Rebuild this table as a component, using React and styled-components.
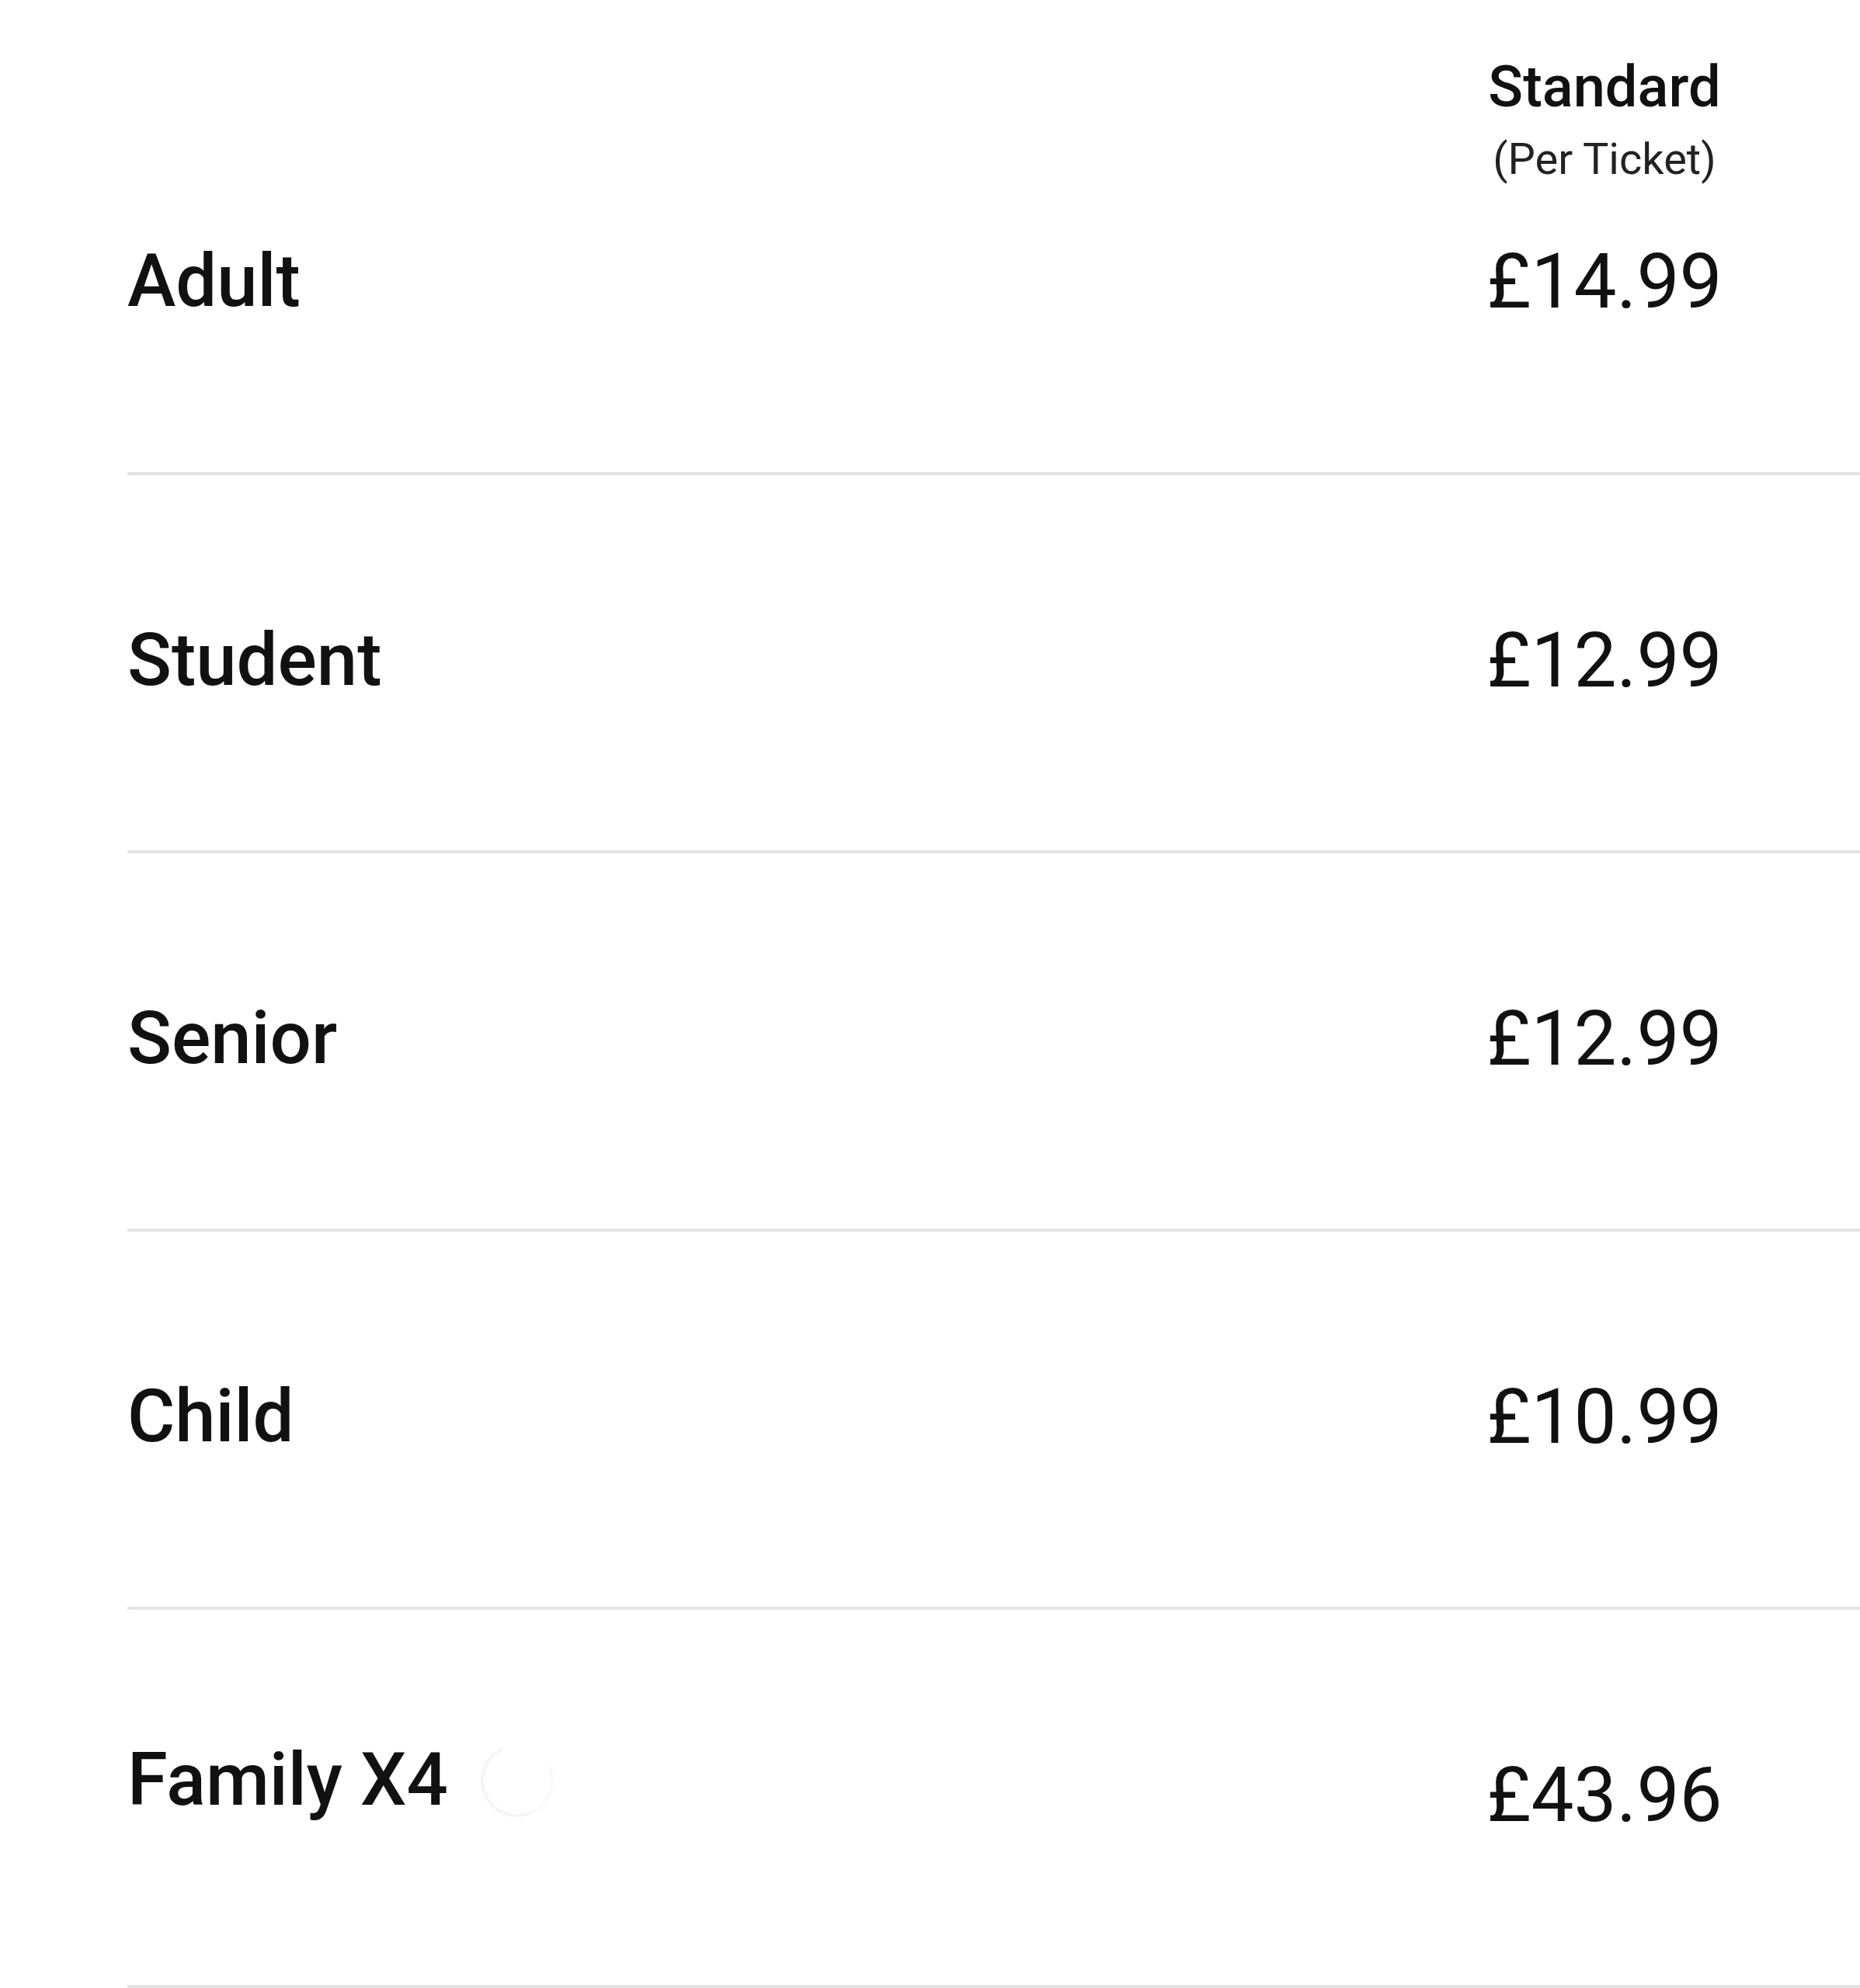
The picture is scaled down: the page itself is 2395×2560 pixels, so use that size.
import React from "react";
import styled, { createGlobalStyle } from "styled-components";

const Global = createGlobalStyle`
  html, body {
    margin: 0;
    padding: 0;
    background: #ffffff;
  }
  body {
    font-family: Roboto, "Liberation Sans", Arial, sans-serif;
    color: #111111;
  }
`;

const Page = styled.div`
  margin-left: 164px;
  overflow: hidden;
`;

const HeaderRow = styled.div`
  display: grid;
  grid-template-columns: 1fr 420px;
  padding: 67px 119px 0 0;
`;

const HeaderCell = styled.div`
  grid-column: 2;
  display: flex;
  flex-direction: column;
  align-items: center;
`;

const HeaderTitle = styled.div`
  font-size: 74px;
  font-weight: 500;
  line-height: 90px;
  color: #111111;
`;

const HeaderSub = styled.div`
  margin-top: 16px;
  font-size: 56px;
  font-weight: 400;
  line-height: 65px;
  color: #222222;
`;

const Row = styled.div`
  box-sizing: border-box;
  display: grid;
  grid-template-columns: 1fr 420px;
  align-items: center;
  height: ${(p) => (p.$first ? "374px" : "487px")};
  padding: 0 119px ${(p) => (p.$first ? "121px" : "6px")} 0;
  border-bottom: 4px solid #e3e3e3;
`;

const LabelCell = styled.div`
  display: flex;
  align-items: center;
  gap: 42px;
  padding-bottom: ${(p) => (p.$raised ? "38px" : "0")};
`;

const Label = styled.span`
  font-size: 94px;
  font-weight: 500;
  line-height: 115px;
  color: #111111;
`;

const Price = styled.div`
  text-align: center;
  font-size: 98px;
  font-weight: 400;
  line-height: 115px;
  color: #111111;
`;

const Spinner = styled.span`
  box-sizing: border-box;
  width: 94px;
  height: 94px;
  border-radius: 50%;
  border: 4px solid #f5f5f5;
  border-top-color: transparent;
  border-right-color: #fafafa;
  transform: rotate(20deg);
`;

const rows = [
  { label: "Adult", price: "£14.99" },
  { label: "Student", price: "£12.99" },
  { label: "Senior", price: "£12.99" },
  { label: "Child", price: "£10.99" },
  { label: "Family X4", price: "£43.96", loading: true },
];

export default function App() {
  return (
    <>
      <Global />
      <Page>
        <HeaderRow>
          <HeaderCell>
            <HeaderTitle>Standard</HeaderTitle>
            <HeaderSub>(Per Ticket)</HeaderSub>
          </HeaderCell>
        </HeaderRow>
        {rows.map((r, i) => (
          <Row key={r.label} $first={i === 0}>
            <LabelCell $raised={r.loading}>
              <Label>{r.label}</Label>
              {r.loading && <Spinner />}
            </LabelCell>
            <Price>{r.price}</Price>
          </Row>
        ))}
      </Page>
    </>
  );
}
